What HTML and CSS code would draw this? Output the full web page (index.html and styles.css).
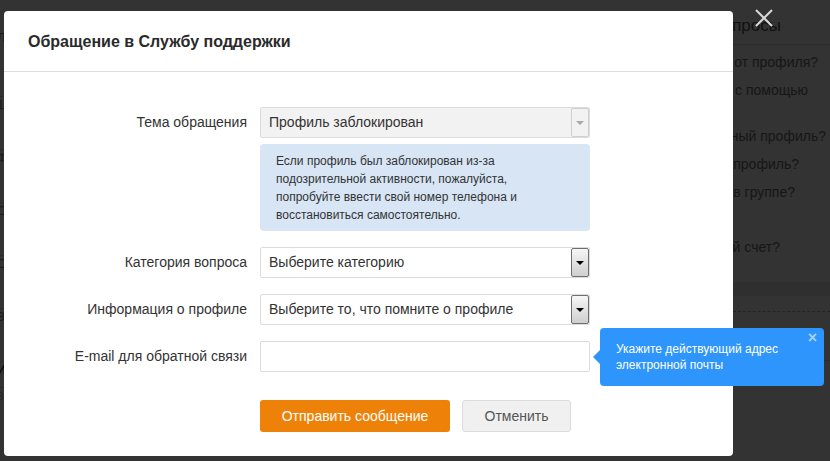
FILE: index.html
```html
<!DOCTYPE html>
<html lang="ru">
<head>
<meta charset="utf-8">
<title>Обращение в Службу поддержки</title>
<link rel="stylesheet" href="styles.css">
</head>
<body>
<div class="page">
  <aside class="left">
    <div class="l-row">Лента</div>
    <div class="l-row">1 Друзья</div>
    <div class="l-row">Фото</div>
    <div class="l-row">Сообщения</div>
    <div class="l-row">События</div>
    <div class="l-row">Заметки</div>
    <div class="l-row l-bold">Игры</div>
    <div class="l-row l-small">Закладки</div>
  </aside>
  <aside class="side">
    <div class="side-head"><span>Частые вопросы</span></div>
    <ul class="side-list">
      <li><span>Как отвязать телефон от профиля?</span></li>
      <li><span>Как войти в профиль с помощью<br>SMS?</span></li>
      <li><span>Как восстановить удаленный профиль?</span></li>
      <li><span>Как удалить свой профиль?</span></li>
      <li><span>Как заблокировать кого-то в группе?</span></li>
      <li class="gap"><span>Как пополнить свой игровой счет?</span></li>
    </ul>
    <div class="side-band"></div>
    <div class="side-dash"></div>
    <div class="side-line"></div>
  </aside>
</div>

<div class="modal">
  <div class="modal-head">
    <h1 class="modal-title">Обращение в Службу поддержки</h1>
  </div>
  <form class="modal-body">
    <div class="row">
      <label class="lbl">Тема обращения</label>
      <div class="ctl">
        <div class="select is-disabled"><span class="select-text">Профиль заблокирован</span><span class="arrow"></span></div>
        <div class="info">Если профиль был заблокирован из-за<br>подозрительной активности, пожалуйста,<br>попробуйте ввести свой номер телефона и<br>восстановиться самостоятельно.</div>
      </div>
    </div>
    <div class="row">
      <label class="lbl">Категория вопроса</label>
      <div class="ctl">
        <div class="select"><span class="select-text">Выберите категорию</span><span class="arrow"></span></div>
      </div>
    </div>
    <div class="row">
      <label class="lbl">Информация о профиле</label>
      <div class="ctl">
        <div class="select"><span class="select-text">Выберите то, что помните о профиле</span><span class="arrow"></span></div>
      </div>
    </div>
    <div class="row">
      <label class="lbl">E-mail для обратной связи</label>
      <div class="ctl">
        <div class="input"></div>
      </div>
    </div>
    <div class="actions">
      <button type="button" class="btn btn-primary">Отправить сообщение</button>
      <button type="button" class="btn btn-cancel">Отменить</button>
    </div>
  </form>
</div>

<button class="close-big" type="button" aria-label="Закрыть">
  <svg width="20" height="20" viewBox="0 0 20 20"><path d="M2 2 L18 18 M18 2 L2 18" stroke="#d8d8d8" stroke-width="2" fill="none"/></svg>
</button>

<div class="tip">
  <span class="tip-close">×</span>
  Укажите действующий адрес<br>электронной почты
</div>
</body>
</html>
```

FILE: styles.css
```css
* { box-sizing: border-box; }

html, body {
  margin: 0;
  padding: 0;
}

body {
  width: 830px;
  height: 461px;
  overflow: hidden;
  background: #333333;
  font-family: Arial, "Liberation Sans", sans-serif;
  color: #333;
  position: relative;
}

/* ---------- background page ---------- */
.page {
  display: flex;
  justify-content: space-between;
  height: 461px;
}

.left {
  width: 4px;
  overflow: hidden;
  padding-top: 30px;
}

.l-row {
  margin-left: -3px;
  white-space: nowrap;
  font-size: 13px;
  line-height: 16px;
  color: #1c1c1c;
  height: 53px;
  border-top: 1px solid #2c2c2c;
}
.l-row:first-child { border-top: none; height: 66px; }
.l-bold { font-weight: bold; color: #0c0c0c; height: 26px; }
.l-small { font-size: 11px; color: #262626; }

.side {
  width: 97px;
  position: relative;
  overflow: hidden;
}

.side-head {
  display: flex;
  justify-content: flex-end;
  height: 45px;
  padding-top: 16px;
  line-height: 20px;
  font-size: 17px;
  color: #111;
  padding-right: 49px;
  border-bottom: 1px solid #2b2b2b;
  white-space: nowrap;
}

.side-list {
  list-style: none;
  margin: 0;
  padding: 8px 0 0;
  font-size: 14px;
  line-height: 18px;
  color: #161616;
}
.side-list li {
  display: flex;
  justify-content: flex-end;
  margin-bottom: 10px;
  white-space: nowrap;
}
.side-list li span { flex: none; }
.side-list li:nth-child(1) { padding-right: 12px; }
.side-list li:nth-child(2) { padding-right: 22px; }
.side-list li:nth-child(3) { padding-right: 4px; }
.side-list li:nth-child(4) { padding-right: 31px; }
.side-list li:nth-child(5) { padding-right: 35px; }
.side-list li.gap { padding-right: 50px; margin-top: 37px; }

.side-band {
  position: absolute;
  left: 0; right: 0;
  top: 282px;
  height: 14px;
  background: #2f2f2f;
}
.side-dash {
  position: absolute;
  left: 0; right: 0;
  top: 311px;
  border-top: 1px dashed #232323;
}
.side-line {
  position: absolute;
  left: 0; right: 0;
  top: 360px;
  border-top: 1px solid #2b2b2b;
}

/* ---------- modal ---------- */
.modal {
  position: absolute;
  left: 4px;
  top: 11px;
  width: 729px;
  height: 445px;
  background: #fff;
  border-radius: 4px;
}

.modal-head {
  height: 61px;
  border-bottom: 1px solid #dedede;
  padding: 22px 0 0 24px;
}

.modal-title {
  margin: 0;
  font-size: 16px;
  line-height: 18px;
  font-weight: bold;
  color: #2a2a2a;
}

.modal-body {
  display: flex;
  flex-direction: column;
  gap: 16px;
  padding-top: 35px;
}

.row {
  display: grid;
  grid-template-columns: 243px 330px;
  column-gap: 13px;
  align-items: start;
}

.lbl {
  text-align: right;
  font-size: 14px;
  line-height: 31px;
  color: #333;
}

.ctl {
  display: flex;
  flex-direction: column;
  gap: 6px;
}

.select {
  position: relative;
  height: 31px;
  border: 1px solid #dcdcdc;
  border-radius: 2px;
  background: #fff;
  padding-left: 8px;
  font-size: 14px;
  line-height: 29px;
  color: #333;
}

.select.is-disabled {
  background: #f2f2f2;
}

.arrow {
  position: absolute;
  top: 0;
  right: 0;
  width: 18px;
  height: 29px;
  border: 1px solid #6f6f6f;
  border-radius: 2px;
  background: linear-gradient(#f6f6f6, #cfcfcf);
}
.arrow::after {
  content: "";
  position: absolute;
  left: 4px;
  top: 12px;
  border-left: 4px solid transparent;
  border-right: 4px solid transparent;
  border-top: 4px solid #000;
}

.is-disabled .arrow {
  border-color: #cfcfcf;
  background: #f2f2f2;
}
.is-disabled .arrow::after {
  border-top-color: #a8a8a8;
}

.info {
  background: #d7e5f5;
  border-radius: 4px;
  padding: 8px 16px 7px;
  font-size: 12px;
  line-height: 18px;
  color: #333;
}

.input {
  height: 31px;
  border: 1px solid #dcdcdc;
  border-radius: 2px;
  background: #fff;
}

.actions {
  display: flex;
  gap: 12px;
  padding-left: 256px;
  margin-top: 12px;
}

.btn {
  height: 32px;
  border-radius: 3px;
  font-family: Arial, "Liberation Sans", sans-serif;
  font-size: 14px;
  padding: 0;
  cursor: pointer;
}

.btn-primary {
  width: 190px;
  background: #ee8208;
  border: none;
  color: #fff;
}

.btn-cancel {
  width: 109px;
  background: #f0f0f0;
  border: 1px solid #dcdcdc;
  color: #555;
}

/* ---------- overlays ---------- */
.close-big {
  position: absolute;
  left: 754px;
  top: 8px;
  width: 20px;
  height: 20px;
  padding: 0;
  border: none;
  background: transparent;
}
.close-big svg { display: block; }

.tip {
  position: absolute;
  left: 600px;
  top: 328px;
  width: 224px;
  height: 58px;
  background: #2d95fc;
  border-radius: 4px;
  padding: 13px 20px 0 16px;
  font-size: 12px;
  line-height: 16px;
  color: #fff;
}
.tip::before {
  content: "";
  position: absolute;
  left: -7px;
  top: 22px;
  border-top: 7px solid transparent;
  border-bottom: 7px solid transparent;
  border-right: 7px solid #2d95fc;
}
.tip-close {
  position: absolute;
  right: 7px;
  top: 2px;
  font-size: 16px;
  font-weight: bold;
  line-height: 16px;
  color: #a6d2ff;
}
```
